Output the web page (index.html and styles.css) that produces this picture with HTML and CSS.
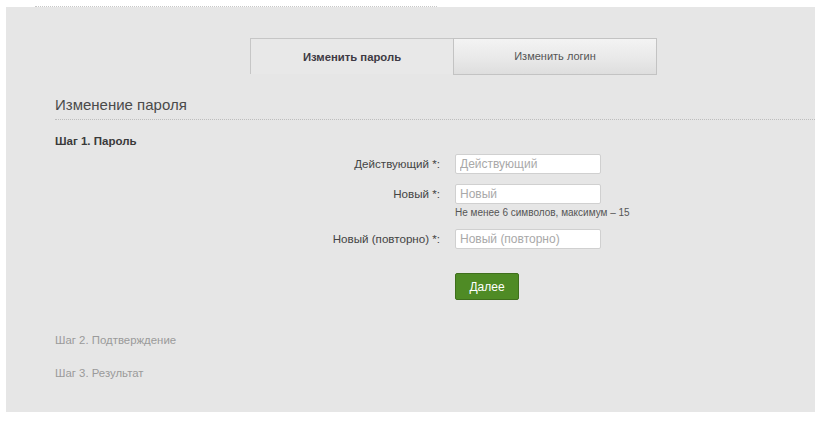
FILE: index.html
```html
<!DOCTYPE html>
<html>
<head>
<meta charset="utf-8">
<link rel="stylesheet" href="styles.css">
</head>
<body>
<div class="topbar"><div class="topline"></div></div>
<div class="panel">
  <div class="tabs">
    <div class="tab active">Изменить пароль</div>
    <div class="tab">Изменить логин</div>
  </div>
  <h1 class="title">Изменение пароля</h1>
  <div class="step current">Шаг 1. Пароль</div>
  <form class="form">
    <label class="lbl">Действующий *:</label>
    <div class="field"><input class="inp" placeholder="Действующий"></div>
    <label class="lbl">Новый *:</label>
    <div class="field"><input class="inp" placeholder="Новый"><div class="hint">Не менее 6 символов, максимум – 15</div></div>
    <label class="lbl">Новый (повторно) *:</label>
    <div class="field"><input class="inp" placeholder="Новый (повторно)"></div>
    <div></div>
    <div class="field"><button type="button" class="btn">Далее</button></div>
  </form>
  <div class="step muted s2">Шаг 2. Подтверждение</div>
  <div class="step muted s3">Шаг 3. Результат</div>
</div>
</body>
</html>
```

FILE: styles.css
```css
html, body {
  margin: 0;
  padding: 0;
  background: #ffffff;
  font-family: "Liberation Sans", Arial, sans-serif;
  color: #444;
}
.topbar {
  height: 7px;
}
.topline {
  margin-left: 35px;
  width: 402px;
  height: 6px;
  border-bottom: 1px dotted #c8c8c8;
}
.panel {
  margin-left: 6px;
  width: 809px;
  height: 405px;
  background: #e6e6e6;
  box-sizing: border-box;
  padding-top: 31px;
}
.tabs {
  display: flex;
  margin-left: 244px;
  height: 36px;
}
.tab {
  width: 203px;
  box-sizing: border-box;
  font-size: 11px;
  text-align: center;
}
.tab.active {
  border-top: 1px solid #c6c6c6;
  border-left: 1px solid #c6c6c6;
  font-weight: bold;
  color: #3e3a44;
  padding-top: 12px;
  background: #e8e8e8;
  font-size: 11.3px;
}
.tab:not(.active) {
  width: 204px;
  border: 1px solid #c3c3c3;
  background: linear-gradient(#f3f3f3, #e9e9e9 55%, #dedede);
  color: #555;
  padding-top: 11px;
  height: 37px;
}
.title {
  margin: 22px 0 0 49px;
  font-size: 15px;
  font-weight: normal;
  color: #4a4a4a;
  line-height: 18px;
  padding-bottom: 5px;
  border-bottom: 1px dotted #bdbdbd;
}
.step {
  margin-left: 49px;
  font-size: 11.5px;
  line-height: 14px;
}
.step.current {
  margin-top: 14px;
  font-weight: bold;
  color: #3a3a3a;
}
.form {
  display: grid;
  grid-template-columns: 434px 146px;
  column-gap: 15px;
  row-gap: 10px;
  margin-top: 6px;
  align-items: start;
}
.lbl {
  text-align: right;
  font-size: 11.6px;
  color: #444;
  line-height: 20px;
}
.field {
  display: flex;
  flex-direction: column;
}
.inp {
  width: 146px;
  height: 20px;
  box-sizing: border-box;
  border: 1px solid #d0d0d0;
  border-radius: 2px;
  background: #fff;
  padding: 0 4px;
  font-family: "Liberation Sans", Arial, sans-serif;
  font-size: 12px;
  margin: 0;
}
.inp::placeholder {
  color: #a9a9a9;
}
.hint {
  font-size: 10px;
  color: #555;
  margin-top: 3px;
  white-space: nowrap;
  line-height: 12px;
}
.btn {
  margin-top: 14px;
  width: 64px;
  height: 27px;
  background: #4f8b25;
  border: 1px solid #3f6f1c;
  border-radius: 2px;
  color: #fff;
  font-family: "Liberation Sans", Arial, sans-serif;
  font-size: 12px;
  padding: 0;
}
.step.muted {
  color: #9a9a9a;
  font-size: 11.4px;
}
.s2 {
  margin-top: 33px;
}
.s3 {
  margin-top: 19px;
}
```
